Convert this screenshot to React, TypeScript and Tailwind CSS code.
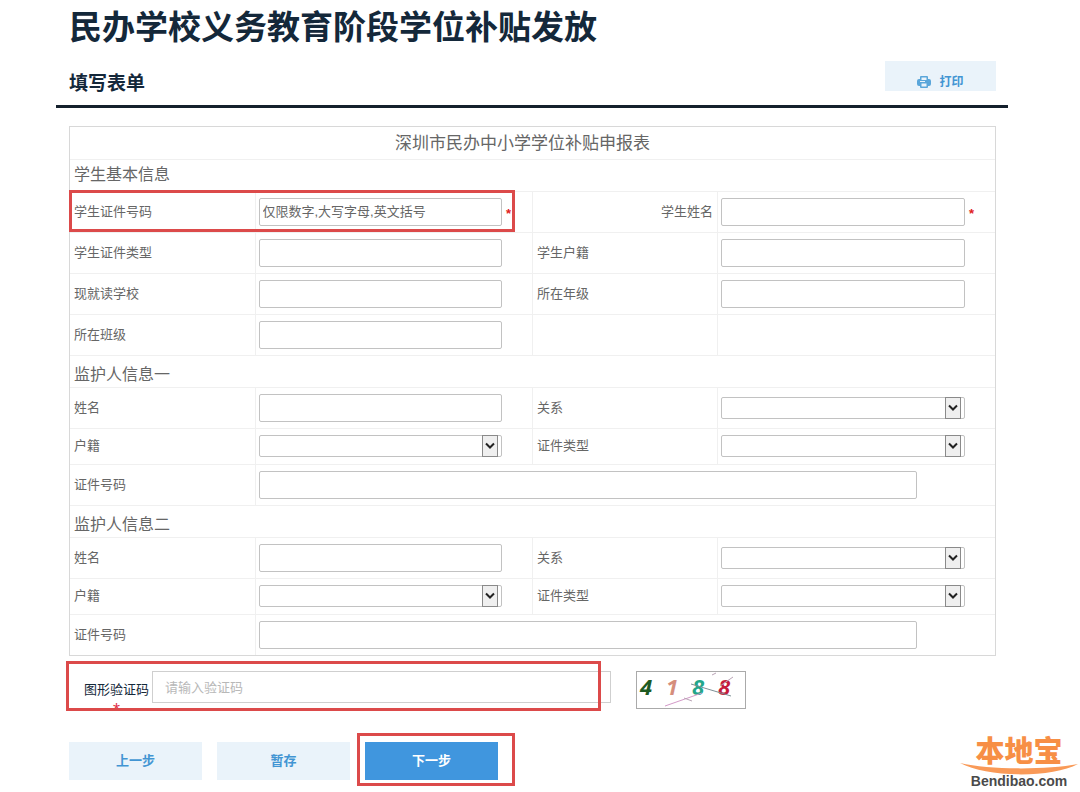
import type { ReactNode } from "react";

type FieldProps = {
  id: string;
  required?: boolean;
  placeholder?: string;
};

const Required = () => <span className="text-[13px] leading-4 font-bold text-[#e02020]">*</span>;

const TextField = ({ id, required, placeholder }: FieldProps) => (
  <div className="flex items-center">
    <input
      id={id}
      type="text"
      required={required}
      placeholder={placeholder}
      className="h-7 min-w-0 flex-1 rounded-xs border border-[#c2c2c2] bg-white px-[3px] text-[13px] text-[#666] placeholder:text-[#666]"
    />
    <span className="w-[30px] shrink-0 pt-1 pl-1">{required && <Required />}</span>
  </div>
);

const SelectField = ({ id }: FieldProps) => (
  <div className="relative mr-[30px] h-[22px]">
    <select id={id} className="h-full w-full appearance-none rounded-xs border border-[#c2c2c2] bg-white px-1 text-[13px] text-[#666]">
      <option value=""></option>
      <option value="1">请选择</option>
    </select>
    <span className="pointer-events-none absolute inset-y-0 right-1 flex w-4 items-center justify-center border border-[#8a8a8a] bg-[#efefef]">
      <svg viewBox="0 0 10 8" className="h-2 w-[10px]" fill="none" stroke="#222" strokeWidth="2">
        <path d="M1 1.5 5 5.5 9 1.5" />
      </svg>
    </span>
  </div>
);

const LabelCell = ({ id, children, right }: { id: string; children: ReactNode; right?: boolean }) => (
  <td className={`border border-[#f0f0f0] px-1 ${right ? "text-right" : ""}`}>
    <label htmlFor={id}>{children}</label>
  </td>
);

const FieldCell = ({ children, span }: { children?: ReactNode; span?: number }) => (
  <td colSpan={span} className="border border-[#f0f0f0] pl-[3px]">
    {children}
  </td>
);

const Guardian = ({ prefix, title }: { prefix: string; title: string }) => (
  <>
    <tr className="h-8">
      <th colSpan={4} className="border border-[#f0f0f0] px-1 pt-2 text-left text-base leading-5 font-normal">
        {title}
      </th>
    </tr>
    <tr className="h-[41px]">
      <LabelCell id={`${prefix}-name`}>姓名</LabelCell>
      <FieldCell><TextField id={`${prefix}-name`} /></FieldCell>
      <LabelCell id={`${prefix}-relation`}>关系</LabelCell>
      <FieldCell><SelectField id={`${prefix}-relation`} /></FieldCell>
    </tr>
    <tr className="h-9">
      <LabelCell id={`${prefix}-household`}>户籍</LabelCell>
      <FieldCell><SelectField id={`${prefix}-household`} /></FieldCell>
      <LabelCell id={`${prefix}-idtype`}>证件类型</LabelCell>
      <FieldCell><SelectField id={`${prefix}-idtype`} /></FieldCell>
    </tr>
    <tr className="h-[41px]">
      <LabelCell id={`${prefix}-idno`}>证件号码</LabelCell>
      <FieldCell span={3}>
        <div className="mr-12">
          <TextField id={`${prefix}-idno`} />
        </div>
      </FieldCell>
    </tr>
  </>
);

const PrintIcon = () => (
  <svg viewBox="0 0 14 14" className="h-[14px] w-[14px]">
    <path
      d="M4 1h6a1 1 0 0 1 1 1v2h1a2 2 0 0 1 2 2v3a2 2 0 0 1-2 2h-1v1a1 1 0 0 1-1 1H4a1 1 0 0 1-1-1v-1H2a2 2 0 0 1-2-2V6a2 2 0 0 1 2-2h1V2a1 1 0 0 1 1-1z"
      fill="#5aa6da"
    />
    <path d="M4.500 2.500h5V5h-5zM3 6h5v1H3zM4.500 8.500h5v3h-5z" fill="#eaf3fa" />
  </svg>
);

const Captcha = () => (
  <svg
    viewBox="0 0 110 38"
    role="img"
    aria-label="验证码"
    className="ml-[25px] h-[38px] w-[110px] shrink-0 font-['Noto_Sans',sans-serif] text-[22px] font-bold italic"
  >
    <rect x="0.5" y="0.5" width="109" height="37" fill="#fff" stroke="#aaa" />
    <text x="4" y="24" fill="#1d5a22">4</text>
    <text x="30" y="24" fill="#d58e7c">1</text>
    <text x="56" y="24" fill="#22a68a">8</text>
    <text x="82" y="24" fill="#c51b3c">8</text>
    <path d="M29 35 66 22" stroke="#d39ac8" fill="none" />
    <path d="M55 13 95 25" stroke="#7d8f95" fill="none" />
    <path d="M48 27l8 3M76 4l4-2M84 15l13-9" stroke="#b9a3b5" fill="none" />
  </svg>
);

const Logo = () => (
  <div className="absolute right-0 bottom-0 flex h-[58px] w-[122px] flex-col items-center">
    <span className="relative z-10 text-[29px] leading-[36px] font-black text-[#f78f45]">本地宝</span>
    <svg viewBox="0 0 122 14" className="absolute top-7 left-0 h-[14px] w-[122px]" fill="#f99a58">
      <path d="M2 1C32 8 88 8 120 2 94 16 30 16 2 1z" />
    </svg>
    <span className="text-[14px] leading-[22px] font-black text-[#4a4a4a]">Bendibao.com</span>
  </div>
);

const App = () => {
  return (
    <div className="relative min-h-screen overflow-hidden bg-white pr-[72px] pb-3 pl-14 font-['Liberation_Sans','Noto_Sans_CJK_SC',sans-serif] text-[13px] text-[#666]">
      <header className="border-b-3 border-[#14202c] pr-3 pl-[13px] text-[#14283a]">
        <h1 className="h-[61px] text-[33px] leading-[56px] font-bold">民办学校义务教育阶段学位补贴发放</h1>
        <div className="flex h-11 items-start justify-between">
          <h2 className="text-[19px] leading-[46px] font-bold">填写表单</h2>
          <button type="button" className="flex h-[30px] w-[111px] items-end justify-center gap-2 bg-[#eaf3fa] text-[12px] font-bold text-[#4295d3]">
            <span className="flex h-[18px] items-center"><PrintIcon /></span>
            <span className="leading-[18px]">打印</span>
          </button>
        </div>
      </header>

      <form className="mt-[18px] pr-3 pl-[13px]" onSubmit={(e) => e.preventDefault()}>
        <div className="relative border border-[#d8d8d8]">
          <table className="w-full table-fixed border-collapse border-hidden">
            <colgroup>
              <col className="w-[20%]" />
              <col className="w-[30%]" />
              <col className="w-[20%]" />
              <col className="w-[30%]" />
            </colgroup>
            <thead>
              <tr className="h-8">
                <th colSpan={4} className="border-b border-[#f0f0f0] pt-[3px] pr-5 text-[17px] leading-6 font-normal">
                  深圳市民办中小学学位补贴申报表
                </th>
              </tr>
            </thead>
            <tbody>
              <tr className="h-8">
                <th colSpan={4} className="border border-[#f0f0f0] px-1 text-left text-base leading-5 font-normal">
                  学生基本信息
                </th>
              </tr>
              <tr className="h-[41px]">
                <LabelCell id="student-idno">学生证件号码</LabelCell>
                <FieldCell><TextField id="student-idno" required placeholder="仅限数字,大写字母,英文括号" /></FieldCell>
                <LabelCell id="student-name" right>学生姓名</LabelCell>
                <FieldCell><TextField id="student-name" required /></FieldCell>
              </tr>
              <tr className="h-[41px]">
                <LabelCell id="student-idtype">学生证件类型</LabelCell>
                <FieldCell><TextField id="student-idtype" /></FieldCell>
                <LabelCell id="student-household">学生户籍</LabelCell>
                <FieldCell><TextField id="student-household" /></FieldCell>
              </tr>
              <tr className="h-[41px]">
                <LabelCell id="school">现就读学校</LabelCell>
                <FieldCell><TextField id="school" /></FieldCell>
                <LabelCell id="grade">所在年级</LabelCell>
                <FieldCell><TextField id="grade" /></FieldCell>
              </tr>
              <tr className="h-[41px]">
                <LabelCell id="class">所在班级</LabelCell>
                <FieldCell><TextField id="class" /></FieldCell>
                <FieldCell />
                <FieldCell />
              </tr>
              <Guardian prefix="g1" title="监护人信息一" />
              <Guardian prefix="g2" title="监护人信息二" />
            </tbody>
          </table>
          <div className="pointer-events-none absolute top-[63px] -left-px h-[42px] w-[48.2%] border-3 border-[#dc4a4a]" />
        </div>

        <div className="mt-[15px] flex w-[677px] max-w-full items-start">
          <div className="relative flex min-w-0 flex-1 items-start">
            <label htmlFor="captcha" className="flex w-[83px] shrink-0 flex-col items-center pt-[9px] pl-3 leading-5 text-[#14283a]">
              图形验证码
              <span className="text-[18px] leading-5 text-[#e0304a]">*</span>
            </label>
            <input
              id="captcha"
              type="text"
              placeholder="请输入验证码"
              className="h-8 min-w-0 flex-1 border border-[#cfcfcf] px-3 text-[13px] placeholder:text-[#b8b8b8]"
            />
            <div className="pointer-events-none absolute -top-[10px] right-[10px] -left-[3px] h-[50px] border-3 border-[#dc4a4a]" />
          </div>
          <Captcha />
        </div>

        <div className="mt-[22px] flex gap-[15px] font-bold">
          <button type="button" className="h-[38px] w-[133px] bg-[#eaf3fa] text-[#4295d3]">上一步</button>
          <button type="button" className="h-[38px] w-[133px] bg-[#eaf3fa] text-[#4295d3]">暂存</button>
          <div className="relative">
            <button type="submit" className="h-[38px] w-[133px] bg-[#4096de] text-white">下一步</button>
            <div className="pointer-events-none absolute -top-[9px] -right-[17px] -bottom-[6px] -left-2 border-3 border-[#dc4a4a]" />
          </div>
        </div>
      </form>

      <Logo />
    </div>
  );
};

export default App;
